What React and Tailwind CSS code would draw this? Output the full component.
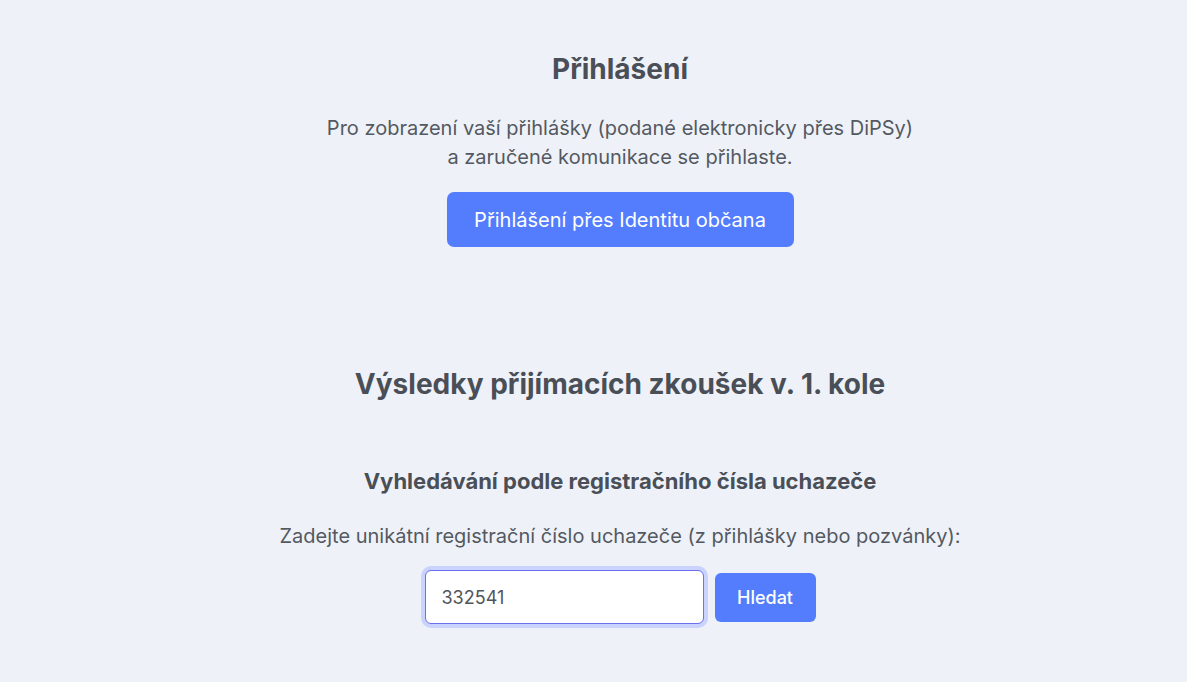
export default function App() {
  return (
    <div className="min-h-[682px] w-full bg-[#eef2f8] pl-[53px] text-[#4a4f57]" style={{ fontFamily: "Inter, 'Noto Sans', sans-serif" }}>
      <div className="flex flex-col items-center pt-[52px]">
        <h1 className="text-[28px] font-bold leading-[34px] text-[#4a4f57]">Přihlášení</h1>
        <p className="mt-[28px] text-center text-[20px] leading-[29px] text-[#545961]">
          Pro zobrazení vaší přihlášky (podané elektronicky přes DiPSy)
          <br />a zaručené komunikace se přihlaste.
        </p>
        <button className="mt-[20px] h-[55px] w-[347px] rounded-[7px] bg-[#537dfd] text-[20px] font-normal text-white">
          Přihlášení přes Identitu občana
        </button>

        <h2 className="mt-[119px] text-[28px] font-bold leading-[36px] text-[#4a4f57]">Výsledky přijímacích zkoušek v. 1. kole</h2>
        <h3 className="mt-[65px] text-[22px] font-bold leading-[28px] text-[#4a4f57]">Vyhledávání podle registračního čísla uchazeče</h3>
        <p className="mt-[27px] text-[20px] leading-[28px] text-[#545961]">Zadejte unikátní registrační číslo uchazeče (z přihlášky nebo pozvánky):</p>
        <div className="mt-[20px] flex items-center gap-[11px]">
          <input
            defaultValue="332541"
            className="h-[54px] w-[279px] rounded-[6px] border border-[#6b6ff0] bg-white px-[16px] text-[18px] text-[#50555c] outline-none ring-[4px] ring-[#c9d3fd]"
          />
          <button className="h-[49px] w-[101px] rounded-[6px] bg-[#537dfd] text-[18px] font-medium text-white">Hledat</button>
        </div>
      </div>
    </div>
  );
}
